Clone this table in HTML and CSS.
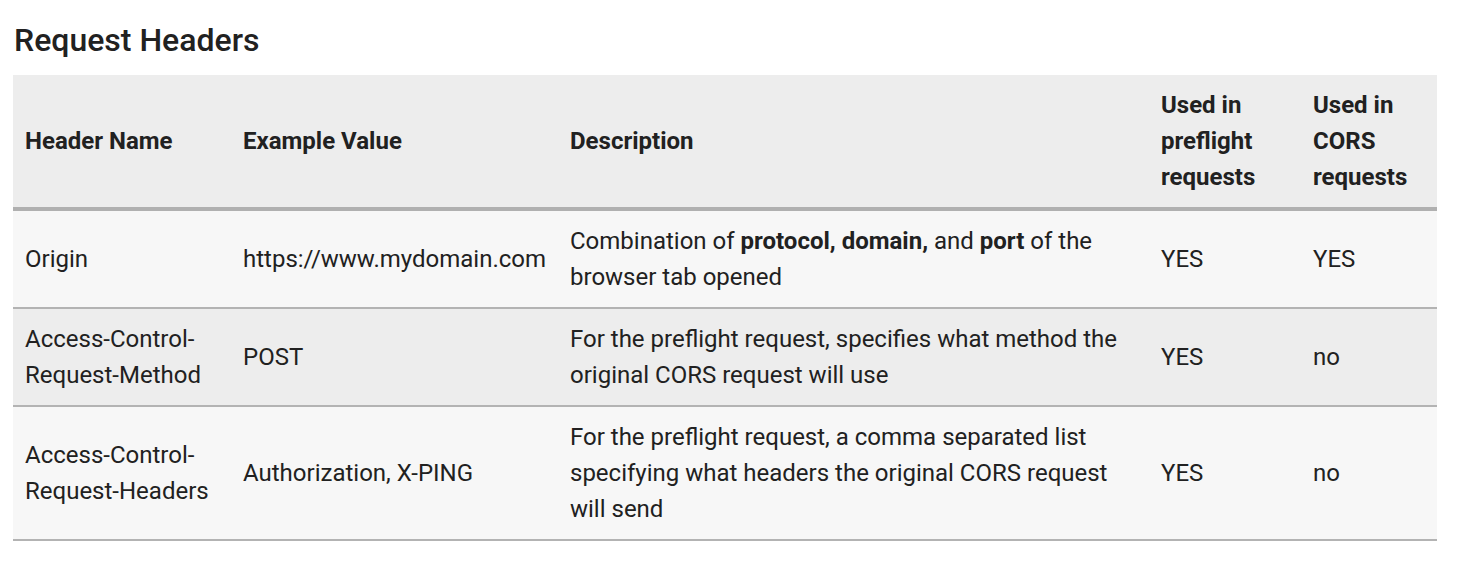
FILE: index.html
```html
<!DOCTYPE html>
<html>
<head>
<meta charset="utf-8">
<link rel="stylesheet" href="styles.css">
</head>
<body>
<div class="page">
  <h2 class="title">Request Headers</h2>
  <table class="hdr-table">
    <colgroup>
      <col class="c1"><col class="c2"><col class="c3"><col class="c4"><col class="c5">
    </colgroup>
    <thead>
      <tr>
        <th>Header Name</th>
        <th>Example Value</th>
        <th>Description</th>
        <th>Used in preflight requests</th>
        <th>Used in CORS requests</th>
      </tr>
    </thead>
    <tbody>
      <tr>
        <td>Origin</td>
        <td>https://www.mydomain.com</td>
        <td>Combination of <b>protocol, domain,</b> and <b>port</b> of the browser tab opened</td>
        <td>YES</td>
        <td>YES</td>
      </tr>
      <tr>
        <td>Access-Control-Request-Method</td>
        <td>POST</td>
        <td>For the preflight request, specifies what method the original CORS request will use</td>
        <td>YES</td>
        <td>no</td>
      </tr>
      <tr>
        <td>Access-Control-Request-Headers</td>
        <td>Authorization, X-PING</td>
        <td>For the preflight request, a comma separated list specifying what headers the original CORS request will send</td>
        <td>YES</td>
        <td>no</td>
      </tr>
    </tbody>
  </table>
</div>
</body>
</html>
```

FILE: styles.css
```css
html, body {
  margin: 0;
  padding: 0;
  background: #ffffff;
}
body {
  font-family: Roboto, "Liberation Sans", sans-serif;
  color: #212121;
}
.page {
  padding: 20px 27px 0 13px;
}
.title {
  font-size: 32px;
  font-weight: 500;
  line-height: 40px;
  margin: 0 0 15px 1px;
  color: #212121;
}
.hdr-table {
  width: 1424px;
  border-collapse: collapse;
  table-layout: fixed;
  font-size: 24px;
  line-height: 36px;
}
.c1 { width: 218px; }
.c2 { width: 327px; }
.c3 { width: 591px; }
.c4 { width: 152px; }
.c5 { width: 136px; }
.hdr-table th {
  text-align: left;
  font-weight: 700;
  background: #ededed;
  padding: 12px;
  vertical-align: middle;
  border-bottom: 4px solid #b0b0b0;
}
.hdr-table td {
  padding: 12px;
  vertical-align: middle;
  border-bottom: 2px solid #b3b3b3;
}
.hdr-table td b {
  font-weight: 700;
}
.hdr-table tbody tr:nth-child(odd) td {
  background: #f7f7f7;
}
.hdr-table tbody tr:nth-child(even) td {
  background: #ededed;
}
```
